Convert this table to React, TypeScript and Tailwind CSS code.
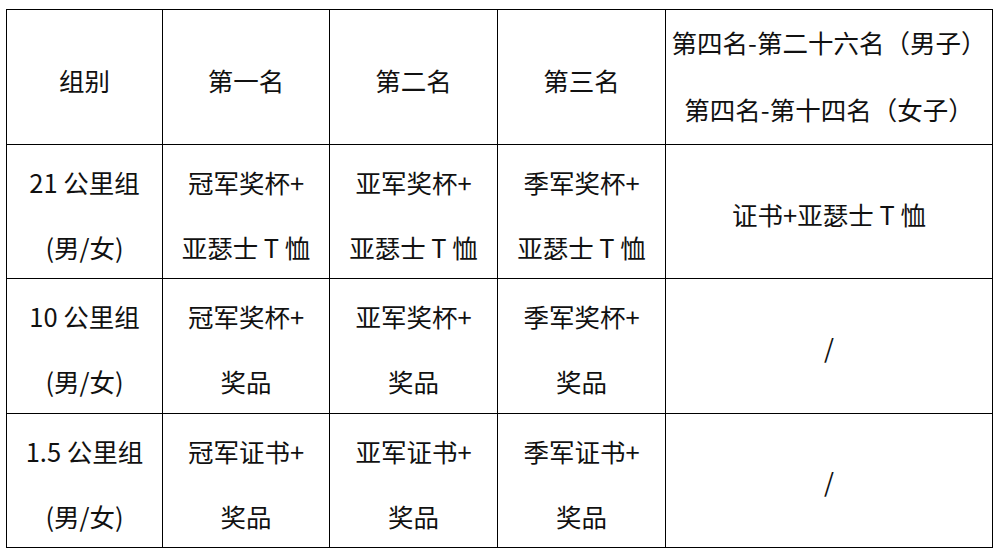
import React from "react";

const rows: string[][][] = [
  [["21 公里组", "(男/女)"], ["冠军奖杯+", "亚瑟士 T 恤"], ["亚军奖杯+", "亚瑟士 T 恤"], ["季军奖杯+", "亚瑟士 T 恤"], ["证书+亚瑟士 T 恤"]],
  [["10 公里组", "(男/女)"], ["冠军奖杯+", "奖品"], ["亚军奖杯+", "奖品"], ["季军奖杯+", "奖品"], ["/"]],
  [["1.5 公里组", "(男/女)"], ["冠军证书+", "奖品"], ["亚军证书+", "奖品"], ["季军证书+", "奖品"], ["/"]],
];

function Cell({ lines, className = "pt-1", leading = "leading-[65px]" }: { lines: string[]; className?: string; leading?: string }) {
  return (
    <div className={`bg-white flex flex-col items-center justify-center text-center ${className}`}>
      {lines.map((l, i) => (
        <div key={i} className={`${leading} whitespace-nowrap`}>
          {l}
        </div>
      ))}
    </div>
  );
}

export default function App() {
  return (
    <div
      className="w-[1003px] h-[555px] bg-white pl-[6px] pt-[9px] text-[25.5px] text-[#111]"
      style={{ fontFamily: '"Noto Sans CJK SC", "Noto Sans", sans-serif' }}
    >
      <div className="grid grid-cols-[155px_166px_167px_167px_326px] grid-rows-[134px_133px_134px_133px] gap-px bg-black border border-black w-[987px]">
        <Cell lines={["组别"]} />
        <Cell lines={["第一名"]} />
        <Cell lines={["第二名"]} />
        <Cell lines={["第三名"]} />
        <Cell lines={["第四名-第二十六名（男子）", "第四名-第十四名（女子）"]} className="pb-1" leading="leading-[67px]" />
        {rows.map((r, ri) =>
          r.map((c, ci) => (
            <Cell key={`${ri}-${ci}`} lines={c} className={c[0] === "/" ? "" : "pt-1"} />
          ))
        )}
      </div>
    </div>
  );
}
